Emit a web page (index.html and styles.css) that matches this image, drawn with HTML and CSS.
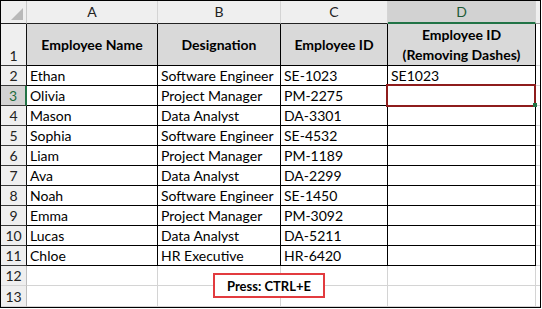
FILE: index.html
```html
<!DOCTYPE html>
<html>
<head>
<meta charset="utf-8">
<link rel="stylesheet" href="styles.css">
</head>
<body>
<div class="sheet">
  <div class="c corner"><span class="tri"></span></div>
  <div class="c ch">A</div>
  <div class="c ch">B</div>
  <div class="c ch">C</div>
  <div class="c ch sel">D</div>
  <div class="c ch e"></div>

  <div class="c rh">1</div>
  <div class="c th">Employee Name</div>
  <div class="c th">Designation</div>
  <div class="c th">Employee ID</div>
  <div class="c th">Employee ID<br>(Removing Dashes)</div>
  <div class="c ed"></div>

  <div class="c rh">2</div><div class="c td">Ethan</div><div class="c td">Software Engineer</div><div class="c td">SE-1023</div><div class="c td">SE1023</div><div class="c ed"></div>
  <div class="c rh rsel">3</div><div class="c td">Olivia</div><div class="c td">Project Manager</div><div class="c td">PM-2275</div><div class="c td active"><span class="handle"></span></div><div class="c ed"></div>
  <div class="c rh">4</div><div class="c td">Mason</div><div class="c td">Data Analyst</div><div class="c td">DA-3301</div><div class="c td"></div><div class="c ed"></div>
  <div class="c rh">5</div><div class="c td">Sophia</div><div class="c td">Software Engineer</div><div class="c td">SE-4532</div><div class="c td"></div><div class="c ed"></div>
  <div class="c rh">6</div><div class="c td">Liam</div><div class="c td">Project Manager</div><div class="c td">PM-1189</div><div class="c td"></div><div class="c ed"></div>
  <div class="c rh">7</div><div class="c td">Ava</div><div class="c td">Data Analyst</div><div class="c td">DA-2299</div><div class="c td"></div><div class="c ed"></div>
  <div class="c rh">8</div><div class="c td">Noah</div><div class="c td">Software Engineer</div><div class="c td">SE-1450</div><div class="c td"></div><div class="c ed"></div>
  <div class="c rh">9</div><div class="c td">Emma</div><div class="c td">Project Manager</div><div class="c td">PM-3092</div><div class="c td"></div><div class="c ed"></div>
  <div class="c rh">10</div><div class="c td">Lucas</div><div class="c td">Data Analyst</div><div class="c td">DA-5211</div><div class="c td"></div><div class="c ed"></div>
  <div class="c rh">11</div><div class="c td">Chloe</div><div class="c td">HR Executive</div><div class="c td">HR-6420</div><div class="c td"></div><div class="c ed"></div>

  <div class="c rh rg">12</div><div class="c g"></div><div class="c g"></div><div class="c g"></div><div class="c g"></div><div class="c g e"></div>
  <div class="c rh rg">13</div><div class="c g"></div><div class="c g"></div><div class="c g"></div><div class="c g"></div><div class="c g e"></div>

  <div class="press">Press: CTRL+E</div>
</div>
</body>
</html>
```
FILE: styles.css
```css
* { box-sizing: border-box; }
html, body { margin: 0; padding: 0; background: #fff; }
body {
  font-family: Lato, "Open Sans", sans-serif;
  font-size: 14px;
  color: #000;
}
.sheet {
  position: relative;
  width: 541px;
  border: 1px solid #000;
  display: grid;
  grid-template-columns: 26px 131px 123px 107px 148px 4px;
  grid-template-rows: 23px 42px repeat(11, 20px) 21px;
  background: #fff;
}
.c {
  display: flex;
  align-items: flex-end;
  overflow: hidden;
  white-space: nowrap;
  border-right: 1px solid #d4d4d4;
  border-bottom: 1px solid #d4d4d4;
  line-height: 18px;
}
.corner {
  background: #efefef;
  border-right: 1px solid #c8c8c8;
  border-bottom: 1px solid #222;
  position: relative;
}
.tri {
  position: absolute;
  right: 3px;
  bottom: 3px;
  width: 0;
  height: 0;
  border-left: 12px solid transparent;
  border-bottom: 12px solid #b9b9b9;
}
.ch {
  background: #efefef;
  justify-content: center;
  align-items: center;
  border-bottom: 1px solid #222;
  color: #222;
}
.ch.sel {
  background: #d2d2d2;
  border-bottom: 2px solid #217346;
  color: #1e5c37;
}
.ch.e { border-right: none; border-bottom-color: #9c9c9c; }
.rh {
  background: #efefef;
  justify-content: center;
  border-right: 1px solid #111;
  border-bottom: 1px solid #3a3a3a;
  color: #222;
  padding-bottom: 0;
}
.rh.rsel {
  background: #d2d2d2;
  color: #1e6b3c;
  border-right: 2px solid #217346;
}
.rh.rg {
  border-right: 1px solid #bdbdbd;
  border-bottom: 1px solid #d4d4d4;
}
.th {
  background: #d9d9d9;
  font-weight: 700;
  justify-content: center;
  align-items: center;
  text-align: center;
  line-height: 20px;
  border-right: 1px solid #000;
  border-bottom: 1px solid #000;
}
.td {
  padding-left: 3px;
  border-right: 1px solid #000;
  border-bottom: 1px solid #000;
}
.ed { border-right: none; }
.g.e { border-right: none; }
.active { position: relative; overflow: visible; }
.active::after {
  content: "";
  position: absolute;
  top: -2px;
  left: -2px;
  right: -1px;
  bottom: -2px;
  border: 2px solid #8e1c1c;
}
.handle {
  position: absolute;
  right: -2px;
  bottom: -2px;
  width: 4px;
  height: 4px;
  background: #217346;
  z-index: 2;
}
.press {
  position: absolute;
  left: 212px;
  top: 272px;
  width: 112px;
  height: 25px;
  border: 2px solid #e23b3f;
  background: #fff;
  font-weight: 700;
  font-size: 13px;
  display: flex;
  align-items: center;
  justify-content: center;
}
```
